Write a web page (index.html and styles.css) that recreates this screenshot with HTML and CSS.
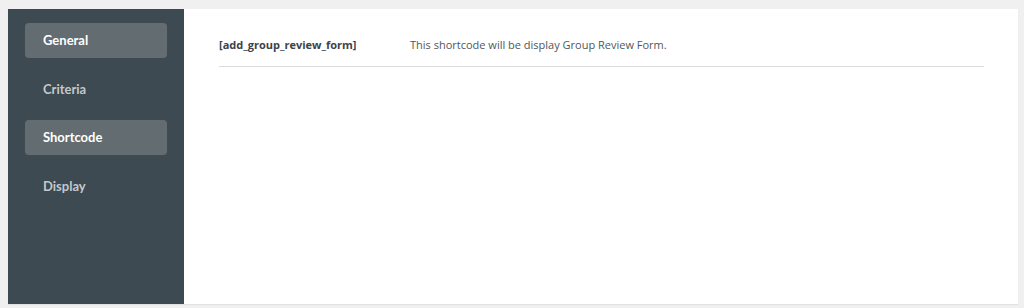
FILE: index.html
```html
<!DOCTYPE html>
<html lang="en">
<head>
    <meta charset="UTF-8">
    <title>Settings</title>
    <link rel="stylesheet" href="styles.css">
</head>
<body>
    <div class="settings">
        <ul class="tabs">
            <li class="tab active">General</li>
            <li class="tab">Criteria</li>
            <li class="tab active">Shortcode</li>
            <li class="tab">Display</li>
        </ul>
        <div class="panel">
            <table class="shortcodes">
                <tr>
                    <th>[add_group_review_form]</th>
                    <td>This shortcode will be display Group Review Form.</td>
                </tr>
            </table>
        </div>
    </div>
</body>
</html>
```

FILE: styles.css
```css
/* Pagina */
body {
    margin: 0;
    padding: 9px 6px 4px 8px;
    background-color: #f0f0f1;
    font-family: "Open Sans", sans-serif;
}

/* Contenedor principal */
.settings {
    display: flex;
    height: 295px;
    background-color: #fff;
    box-shadow: 0 1px 1px rgba(0, 0, 0, 0.06);
}

/* Menu lateral */
.tabs {
    width: 176px;
    margin: 0;
    padding: 14px 17px 0 17px;
    box-sizing: border-box;
    list-style: none;
    background-color: #3d4a51;
}

.tab {
    height: 35px;
    line-height: 35px;
    padding-left: 18px;
    margin-bottom: 13.5px;
    border-radius: 4px;
    font-family: Lato, sans-serif;
    font-weight: 700;
    font-size: 13px;
    color: #c3c8cb;
}

.tab.active {
    background-color: #636c71;
    color: #fff;
}

/* Contenido */
.panel {
    flex: 1;
    padding: 25px 34px 0 35px;
}

.shortcodes {
    width: 100%;
    border-collapse: collapse;
    font-size: 11px;
    color: #3c434a;
}

.shortcodes th {
    width: 191px;
    text-align: left;
    font-weight: 700;
    padding: 3px 0 14px 0;
    border-bottom: 1px solid #dcdcde;
}

.shortcodes td {
    padding: 3px 0 14px 0;
    border-bottom: 1px solid #dcdcde;
    color: #50575e;
}
```
